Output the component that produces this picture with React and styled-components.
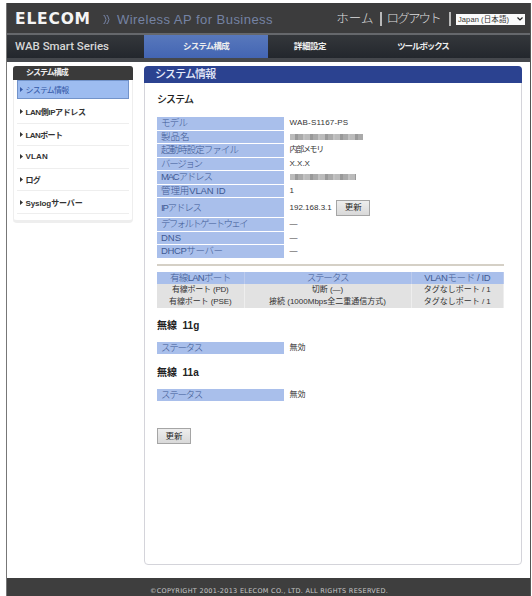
import React from "react"
import styled, { createGlobalStyle } from "styled-components"

const GlobalStyle = createGlobalStyle`
    * {
        box-sizing: border-box;
    }
    body {
        margin: 0;
        background: #fff;
        font-family: "Liberation Sans", "Noto Sans CJK JP", sans-serif;
        font-size: 8px;
        color: #222;
    }
`
const Page = styled.div`
    display: flex;
    flex-direction: column;
    width: 525px;
    height: 593px;
    margin: 3px 0 0 6px;
    border-left: 1px solid #777;
    border-right: 1px solid #555;
    overflow: hidden;
    white-space: nowrap;
`
const Header = styled.header`
    display: flex;
    align-items: center;
    height: 32px;
    flex-shrink: 0;
    padding: 2px 5px 0 8px;
    background: #3c3c3d;
    border-bottom: 2px solid #66686c;
    color: #dcdcdc;
`
const Logo = styled.div`
    width: 77px;
    font-family: "DejaVu Sans", sans-serif;
    font-size: 15.5px;
    font-weight: bold;
    letter-spacing: 0.8px;
    color: #f4f4f4;
`
const Chevrons = styled.svg`
    width: 7px;
    height: 9px;
    margin: 0 7px 0 11px;
`
const Tagline = styled.div`
    flex-grow: 1;
    font-size: 13px;
    letter-spacing: 0.46px;
    color: #7583a4;
`
const HeaderLink = styled.a`
    font-size: 12.5px;
    font-weight: 300;
    letter-spacing: ${({ $spacing }) => $spacing || "0"};
    line-height: 20px;
    color: #ddd;
`
const Divider = styled.span`
    width: 2px;
    height: 14px;
    margin: ${({ $margin }) => $margin};
    background: #b9b9b9;
`
const LanguageSelect = styled.div`
    display: flex;
    align-items: center;
    justify-content: space-between;
    width: 69px;
    height: 11px;
    padding: 0 2px;
    background: #fafafa;
    font-size: 7.5px;
    letter-spacing: 0.1px;
    line-height: 11px;
    color: #333;
`
const Nav = styled.nav`
    display: grid;
    grid-template-columns: 137px 124px 84px 142px 1fr;
    height: 27px;
    flex-shrink: 0;
    background: linear-gradient(#34373b, #23272d);
    border-bottom: 4px solid #45484d;
    font-size: 8.5px;
    font-weight: bold;
    line-height: 23px;
    text-align: center;
    color: #eee;
`
const Series = styled.div`
    padding-left: 8px;
    text-align: left;
    font-family: Roboto, sans-serif;
    font-size: 11.5px;
    font-weight: 500;
    letter-spacing: 0;
    color: #d6d6d6;
`
const NavItem = styled.div`
    background: ${({ $active }) => ($active ? "linear-gradient(#5878bc, #4365b3)" : "none")};
    letter-spacing: ${({ $spacing }) => $spacing || "-0.4px"};
`
const Content = styled.div`
    display: flex;
    align-items: flex-start;
    gap: 11px;
    height: 516px;
    flex-shrink: 0;
    padding: 4px 8px 0 6px;
`
const Sidebar = styled.aside`
    width: 120px;
    height: 157px;
    flex-shrink: 0;
    border: solid #eee;
    border-width: 0 1px 3px;
    border-radius: 4px;
`
const SidebarTitle = styled.div`
    height: 14px;
    margin: 0 -1px;
    padding-left: 13px;
    border-radius: 3px 3px 0 0;
    background: #3a3a3a;
    font-size: 8px;
    font-weight: bold;
    letter-spacing: -1px;
    line-height: 13px;
    color: #eee;
`
const MenuItem = styled.div`
    display: flex;
    align-items: center;
    gap: 2.5px;
    height: ${({ $active }) => ($active ? "19px" : "22.6px")};
    margin: ${({ $active }) => ($active ? "0 3px 2px" : "0 3px")};
    padding-left: ${({ $active }) => ($active ? "2px" : "3px")};
    border: ${({ $active }) => ($active ? "1px solid #7293ca" : "none")};
    border-bottom: 1px solid ${({ $active }) => ($active ? "#7293ca" : "#eee")};
    background: ${({ $active }) => ($active ? "#9dbcf0" : "#fff")};
    font-size: 8px;
    font-weight: ${({ $active }) => ($active ? "normal" : "bold")};
    letter-spacing: ${({ $spacing }) => $spacing || "0"};
    color: ${({ $active }) => ($active ? "#3459a8" : "#333")};
`
const Arrow = styled.svg`
    width: 3px;
    height: 5px;
    fill: currentColor;
`
const Panel = styled.main`
    width: 378px;
    height: 499px;
    border: 1px solid #d4d4da;
    border-radius: 4px;
`
const PanelTitle = styled.h1`
    height: 17px;
    margin: -1px -1px 0;
    padding-left: 11px;
    border-radius: 4px 4px 0 0;
    background: #2b4290;
    font-size: 11px;
    font-weight: 500;
    letter-spacing: -0.9px;
    line-height: 16px;
    color: #e6ebfa;
`
const PanelBody = styled.div`
    width: 359px;
    padding: 8px 0 0 12px;
`
const SectionTitle = styled.h2`
    height: ${({ $height }) => $height};
    margin: ${({ $top }) => $top || "0"} 0 0;
    font-size: 10px;
    font-weight: ${({ $weight }) => $weight || "bold"};
    letter-spacing: ${({ $spacing }) => $spacing || "0"};
    line-height: 17px;
    white-space: pre;
    color: #222;
`
const InfoRow = styled.div`
    display: grid;
    grid-template-columns: 127px 1fr;
    gap: 5.5px;
    height: ${({ $height }) => $height || "12.5px"};
    margin-bottom: 1px;
    line-height: ${({ $height }) => $height || "12.5px"};
`
const InfoLabel = styled.div`
    padding-left: 4px;
    background: #a9bfeb;
    font-size: 9.5px;
    font-weight: 300;
    letter-spacing: ${({ $spacing }) => $spacing || "0"};
    color: #405a94;
`
const InfoValue = styled.div`
    display: flex;
    align-items: center;
    gap: 4.5px;
    font-size: 8px;
    letter-spacing: ${({ $spacing }) => $spacing || "0"};
    color: #333;
`
const Masked = styled.span`
    width: ${({ $width }) => $width};
    height: 6px;
    background: repeating-linear-gradient(90deg, #bbb 0 5px, #999 5px 8px, #aaa 8px 13px, #c2c2c2 13px 15px);
`
const Button = styled.button`
    width: 34px;
    height: 16px;
    margin-top: ${({ $top }) => $top || "0"};
    padding: 0;
    border: 1px solid #a5a5a5;
    background: linear-gradient(#eee, #d9d9d9);
    font-family: inherit;
    font-size: 8.5px;
    line-height: 13px;
    color: #222;
`
const Rule = styled.hr`
    width: 347px;
    height: 2px;
    margin: 6px 0;
    border: none;
    background: #d5d0c6;
`
const PortTable = styled.table`
    width: 347px;
    margin-bottom: 9px;
    border-collapse: collapse;
    table-layout: fixed;
    text-align: center;
`
const HeadCell = styled.th`
    width: ${({ $width }) => $width};
    height: 12px;
    padding: 0;
    border-right: 1px solid #bccbed;
    background: #a9bfeb;
    font-size: 9.5px;
    font-weight: 300;
    letter-spacing: ${({ $spacing }) => $spacing || "0"};
    line-height: 12px;
    color: #405a94;
`
const Cell = styled.td`
    height: 12px;
    padding: 0;
    border-right: 1px solid #eee;
    background: #e2e2e2;
    font-size: 8px;
    letter-spacing: ${({ $spacing }) => $spacing || "0"};
    line-height: 12px;
    color: #333;
`
const Footer = styled.footer`
    height: 18px;
    padding: 8px 0 0 143px;
    background: #3e3e3e;
    font-family: "DejaVu Sans", sans-serif;
    font-size: 6.5px;
    letter-spacing: 0.29px;
    line-height: 10px;
    color: #c8c8c8;
`

const menu = [
    { label: "システム情報", active: true, spacing: "-0.8px" },
    { label: "LAN側IPアドレス", spacing: "-0.4px" },
    { label: "LANポート", spacing: "-0.6px" },
    { label: "VLAN", spacing: "0.2px" },
    { label: "ログ", spacing: "-0.8px" },
    { label: "Syslogサーバー", spacing: "-0.1px" },
]

const App = () => {

    return(
        <>
            <GlobalStyle />
            <Page>
                <Header>
                    <Logo>ELECOM</Logo>
                    <Chevrons viewBox="0 0 7 9" fill="none" stroke="#7583a4">
                        <path d="M.5.5h1l1.5 4-1.5 4h-1M3.5.5h1l1.5 4-1.5 4h-1" />
                    </Chevrons>
                    <Tagline>Wireless AP for Business</Tagline>
                    <HeaderLink>ホーム</HeaderLink>
                    <Divider $margin="0 4px 0 7px" />
                    <HeaderLink $spacing="-1.8px">ログアウト</HeaderLink>
                    <Divider $margin="0 5px 0 9px" />
                    <LanguageSelect>
                        Japan (日本語)
                        <svg width="6" height="4" viewBox="0 0 6 4" fill="none" stroke="#222" strokeWidth="1.2">
                            <path d="M.5.5L3 3 5.5.5" />
                        </svg>
                    </LanguageSelect>
                </Header>
                <Nav>
                    <Series>WAB Smart Series</Series>
                    <NavItem $active $spacing="-0.8px">システム構成</NavItem>
                    <NavItem>詳細設定</NavItem>
                    <NavItem $spacing="-1.1px">ツールボックス</NavItem>
                </Nav>
                <Content>
                    <Sidebar>
                        <SidebarTitle>システム構成</SidebarTitle>
                        {menu.map((item) => (
                            <MenuItem key={item.label} $active={item.active} $spacing={item.spacing}>
                                <Arrow viewBox="0 0 3 5"><path d="M0 0l3 2.5L0 5z" /></Arrow>
                                {item.label}
                            </MenuItem>
                        ))}
                    </Sidebar>
                    <Panel>
                        <PanelTitle>システム情報</PanelTitle>
                        <PanelBody>
                            <SectionTitle $height="26px" $weight="500" $spacing="-0.9px">システム</SectionTitle>
                            <InfoRow>
                                <InfoLabel $spacing="-0.8px">モデル</InfoLabel>
                                <InfoValue $spacing="0.2px">WAB-S1167-PS</InfoValue>
                            </InfoRow>
                            <InfoRow>
                                <InfoLabel>製品名</InfoLabel>
                                <InfoValue><Masked $width="73px" /></InfoValue>
                            </InfoRow>
                            <InfoRow>
                                <InfoLabel $spacing="-0.95px">起動時設定ファイル</InfoLabel>
                                <InfoValue $spacing="-1.3px">内部メモリ</InfoValue>
                            </InfoRow>
                            <InfoRow>
                                <InfoLabel $spacing="-1.3px">バージョン</InfoLabel>
                                <InfoValue>X.X.X</InfoValue>
                            </InfoRow>
                            <InfoRow>
                                <InfoLabel $spacing="-1.2px">MACアドレス</InfoLabel>
                                <InfoValue><Masked $width="66px" /></InfoValue>
                            </InfoRow>
                            <InfoRow>
                                <InfoLabel $spacing="-0.1px">管理用VLAN ID</InfoLabel>
                                <InfoValue>1</InfoValue>
                            </InfoRow>
                            <InfoRow $height="19px">
                                <InfoLabel $spacing="-1.2px">IPアドレス</InfoLabel>
                                <InfoValue>192.168.3.1 <Button>更新</Button></InfoValue>
                            </InfoRow>
                            <InfoRow>
                                <InfoLabel $spacing="-1.7px">デフォルトゲートウェイ</InfoLabel>
                                <InfoValue>—</InfoValue>
                            </InfoRow>
                            <InfoRow>
                                <InfoLabel>DNS</InfoLabel>
                                <InfoValue>—</InfoValue>
                            </InfoRow>
                            <InfoRow>
                                <InfoLabel $spacing="-0.4px">DHCPサーバー</InfoLabel>
                                <InfoValue>—</InfoValue>
                            </InfoRow>
                            <Rule />
                            <PortTable>
                                <thead>
                                    <tr>
                                        <HeadCell $width="87px" $spacing="-0.7px">有線LANポート</HeadCell>
                                        <HeadCell $width="167px" $spacing="-1.2px">ステータス</HeadCell>
                                        <HeadCell $spacing="-0.4px">VLANモード / ID</HeadCell>
                                    </tr>
                                </thead>
                                <tbody>
                                    <tr>
                                        <Cell $spacing="-0.2px">有線ポート (PD)</Cell>
                                        <Cell>切断 (—)</Cell>
                                        <Cell>タグなしポート / 1</Cell>
                                    </tr>
                                    <tr>
                                        <Cell $spacing="-0.1px">有線ポート (PSE)</Cell>
                                        <Cell>接続 (1000Mbps全二重通信方式)</Cell>
                                        <Cell>タグなしポート / 1</Cell>
                                    </tr>
                                </tbody>
                            </PortTable>
                            <SectionTitle $height="25px">無線  11g</SectionTitle>
                            <InfoRow>
                                <InfoLabel $spacing="-1.3px">ステータス</InfoLabel>
                                <InfoValue>無効</InfoValue>
                            </InfoRow>
                            <SectionTitle $top="9.5px" $height="25px">無線  11a</SectionTitle>
                            <InfoRow>
                                <InfoLabel $spacing="-1.3px">ステータス</InfoLabel>
                                <InfoValue>無効</InfoValue>
                            </InfoRow>
                            <Button $top="26px">更新</Button>
                        </PanelBody>
                    </Panel>
                </Content>
                <Footer>©COPYRIGHT 2001-2013 ELECOM CO., LTD. ALL RIGHTS RESERVED.</Footer>
            </Page>
        </>
    )
}

export default App
